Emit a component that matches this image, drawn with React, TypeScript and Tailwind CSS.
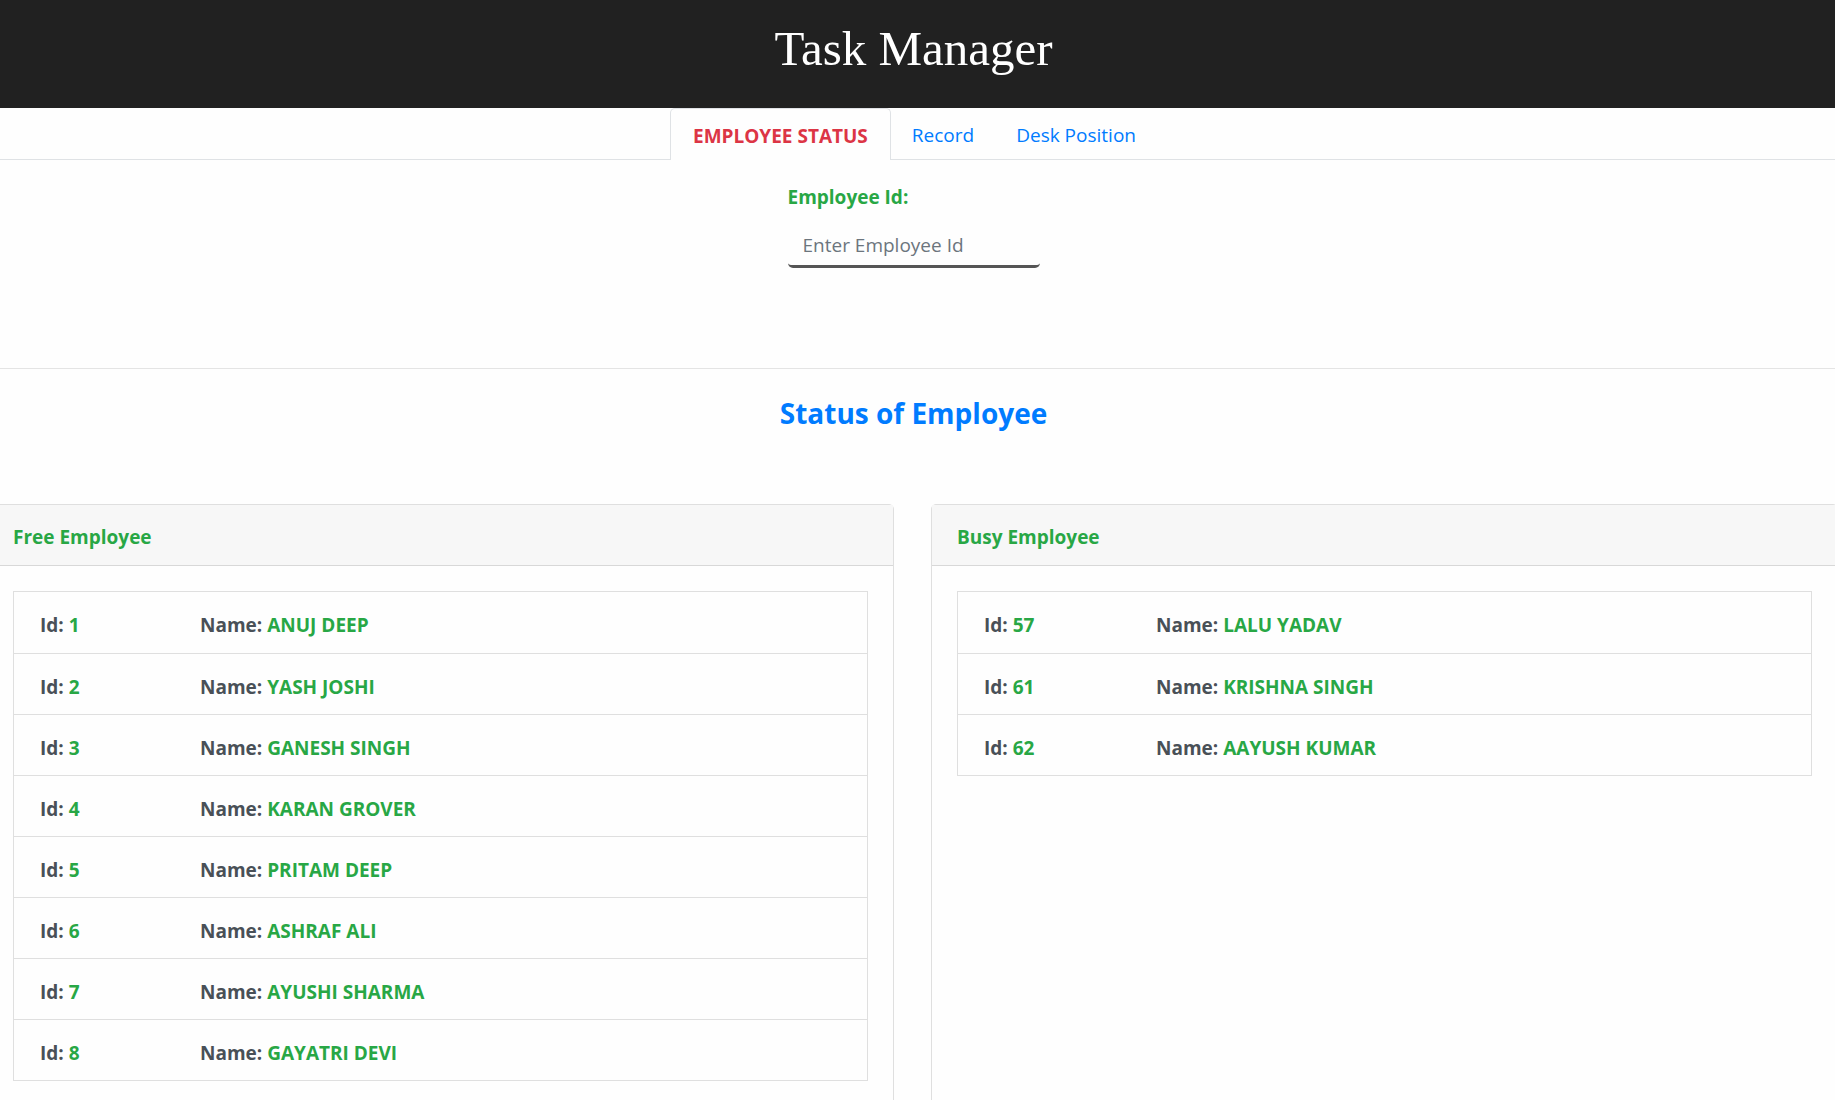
type Employee = { id: number; name: string };

const freeEmployees: Employee[] = [
  { id: 1, name: "ANUJ DEEP" },
  { id: 2, name: "YASH JOSHI" },
  { id: 3, name: "GANESH SINGH" },
  { id: 4, name: "KARAN GROVER" },
  { id: 5, name: "PRITAM DEEP" },
  { id: 6, name: "ASHRAF ALI" },
  { id: 7, name: "AYUSHI SHARMA" },
  { id: 8, name: "GAYATRI DEVI" },
];

const busyEmployees: Employee[] = [
  { id: 57, name: "LALU YADAV" },
  { id: 61, name: "KRISHNA SINGH" },
  { id: 62, name: "AAYUSH KUMAR" },
];

function EmployeeCard({ title, employees, idWidth }: { title: string; employees: Employee[]; idWidth: string }) {
  return (
    <section className="min-h-[620px] flex-1 rounded-[5px] border border-[#dfdfdf]">
      <h3 className="border-b border-[#d8d8d8] bg-[#f7f7f7] px-[25px] pt-[17px] pb-[13px] text-[#28a745]">{title}</h3>
      <div className="p-[25px]">
        <ul className="border border-b-0 border-[#dfdfdf]">
          {employees.map((e) => (
            <li key={e.id} className="flex border-b border-[#dfdfdf] pt-[18px] pb-3 pl-[26px] text-[#495057] first:pb-[13px]">
              <span className={idWidth}>
                Id: <span className="text-[#28a745]">{e.id}</span>
              </span>
              <span>
                Name: <span className="text-[#28a745]">{e.name}</span>
              </span>
            </li>
          ))}
        </ul>
      </div>
    </section>
  );
}

export default function App() {
  return (
    <div className="h-screen overflow-hidden bg-[#fefefe] font-['Open_Sans','Noto_Sans',sans-serif] text-[19px] leading-[30px]">
      <header className="bg-[#212121] pt-[19px] pr-2 pb-[29px] text-center">
        <h1 className="font-['Liberation_Serif',serif] text-[49px] leading-[60px] text-white">Task Manager</h1>
      </header>

      <nav className="flex justify-center border-b border-[#dfe2e5] pr-2">
        <a href="#status" className="-mb-px rounded-t-[5px] border border-b-0 border-[#dfe2e5] bg-[#fefefe] px-[22px] pt-3 pb-[9px] font-bold text-[#dc3545]">
          EMPLOYEE STATUS
        </a>
        <a href="#record" className="px-[21px] pt-3 pb-[9px] text-[#007bff]">Record</a>
        <a href="#desk" className="px-[21px] pt-3 pb-[9px] text-[#007bff]">Desk Position</a>
      </nav>

      <form className="flex flex-col items-center pt-[22px] pr-2">
        <div className="flex w-[252px] flex-col">
          <label htmlFor="employee-id" className="font-bold text-[#28a745]">Employee Id:</label>
          <input
            id="employee-id"
            type="text"
            placeholder="Enter Employee Id"
            className="mt-2.5 h-[46px] rounded-[5px] border-b-[3px] border-[#555] bg-transparent px-[15px] pt-0.5 outline-none placeholder:text-[#6c757d]"
          />
        </div>
      </form>

      <hr className="mt-[100px] border-[#e4e4e4]" />
      <h2 className="mt-[26px] pr-2 text-center text-[28px] leading-9 font-bold text-[#007bff]">Status of Employee</h2>

      <main className="-mr-[3px] mt-[73px] -ml-[13px] flex gap-[37px] font-bold">
        <EmployeeCard title="Free Employee" employees={freeEmployees} idWidth="w-[160px]" />
        <EmployeeCard title="Busy Employee" employees={busyEmployees} idWidth="w-[172px]" />
      </main>
    </div>
  );
}
